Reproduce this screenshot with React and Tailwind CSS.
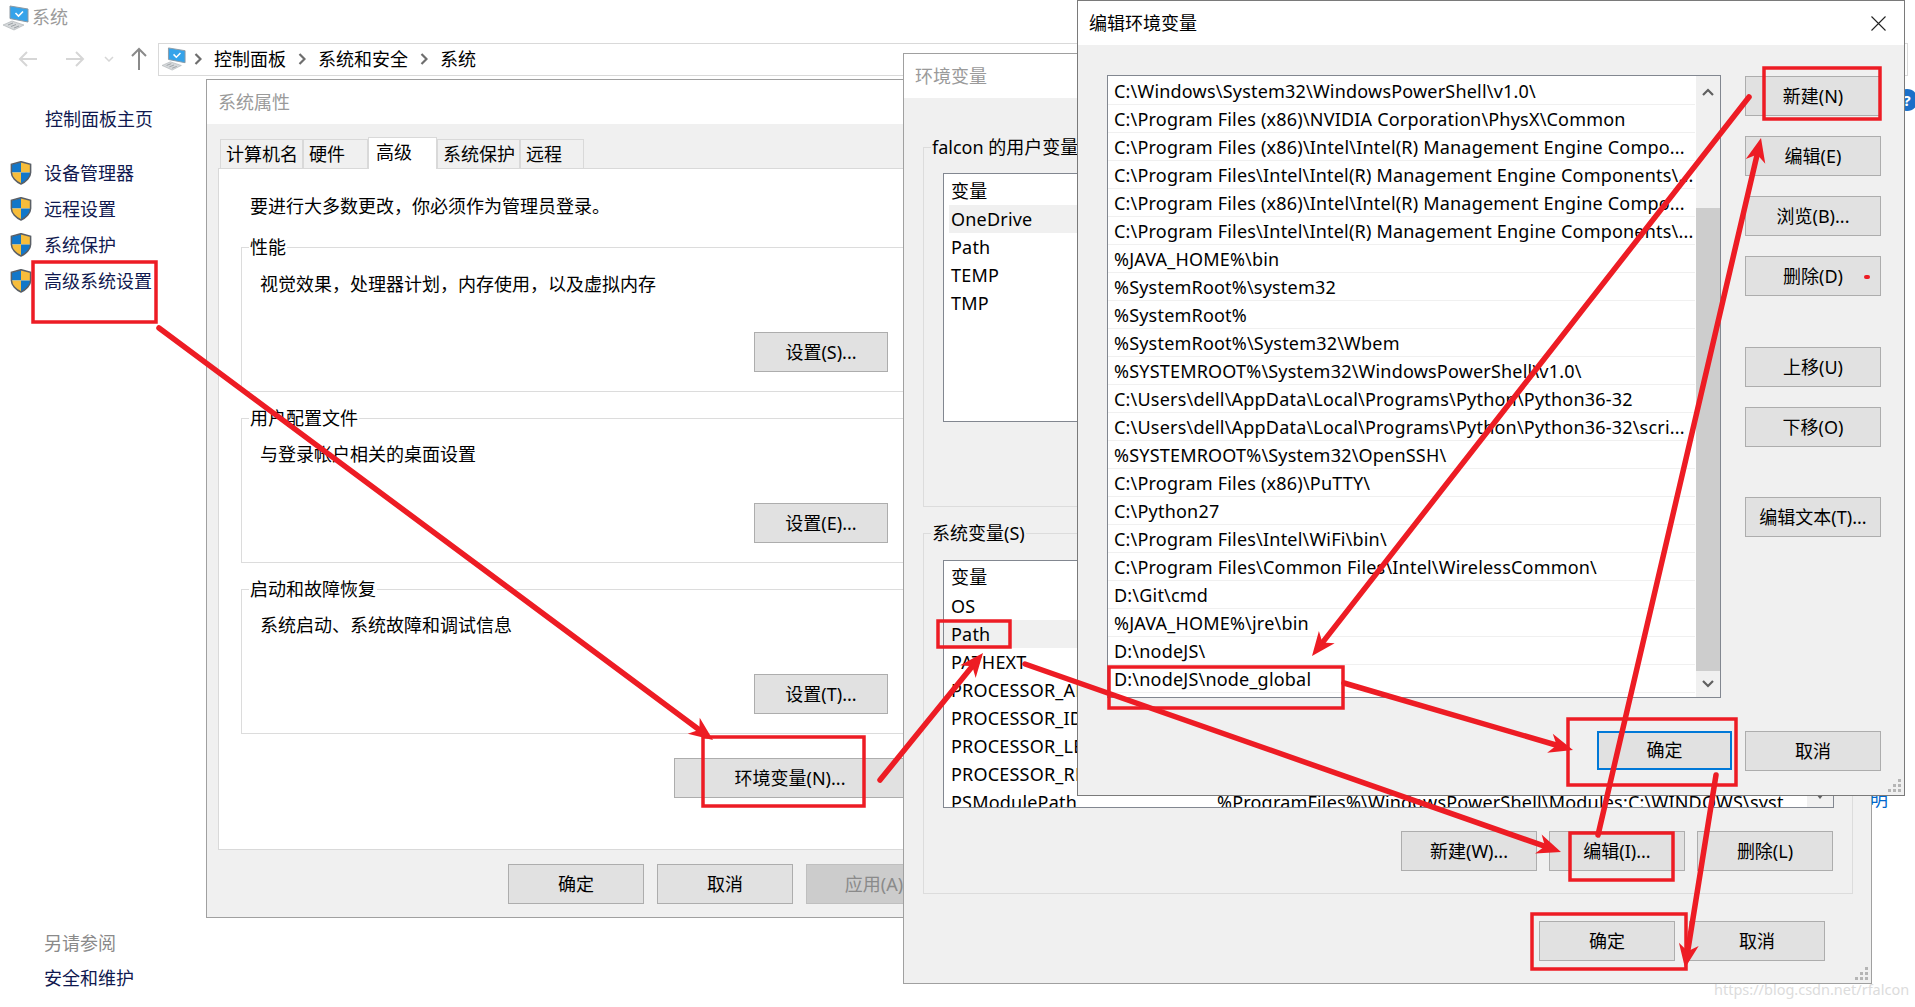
const font = { fontFamily: '"Noto Sans", "Noto Sans CJK SC", sans-serif' }

const editRows = [
  'C:\\Windows\\System32\\WindowsPowerShell\\v1.0\\',
  'C:\\Program Files (x86)\\NVIDIA Corporation\\PhysX\\Common',
  'C:\\Program Files (x86)\\Intel\\Intel(R) Management Engine Compo...',
  'C:\\Program Files\\Intel\\Intel(R) Management Engine Components\\...',
  'C:\\Program Files (x86)\\Intel\\Intel(R) Management Engine Compo...',
  'C:\\Program Files\\Intel\\Intel(R) Management Engine Components\\...',
  '%JAVA_HOME%\\bin',
  '%SystemRoot%\\system32',
  '%SystemRoot%',
  '%SystemRoot%\\System32\\Wbem',
  '%SYSTEMROOT%\\System32\\WindowsPowerShell\\v1.0\\',
  'C:\\Users\\dell\\AppData\\Local\\Programs\\Python\\Python36-32',
  'C:\\Users\\dell\\AppData\\Local\\Programs\\Python\\Python36-32\\scri...',
  '%SYSTEMROOT%\\System32\\OpenSSH\\',
  'C:\\Program Files (x86)\\PuTTY\\',
  'C:\\Python27',
  'C:\\Program Files\\Intel\\WiFi\\bin\\',
  'C:\\Program Files\\Common Files\\Intel\\WirelessCommon\\',
  'D:\\Git\\cmd',
  '%JAVA_HOME%\\jre\\bin',
  'D:\\nodeJS\\',
  'D:\\nodeJS\\node_global',
]

const systemVars = ['OS', 'Path', 'PATHEXT', 'PROCESSOR_ARCHITECTURE', 'PROCESSOR_IDENTIFIER', 'PROCESSOR_LEVEL', 'PROCESSOR_REVISION']

function Btn({ children, className = 'w-[136px]', disabled }) {
  return (
    <div
      className={`flex h-[40px] shrink-0 items-center justify-center border text-[18px] ${
        disabled ? 'border-[#bfbfbf] bg-[#cccccc] text-[#8a8a8a]' : 'border-[#adadad] bg-[#e1e1e1] text-black'
      } ${className}`}
    >
      {children}
    </div>
  )
}

function Shield() {
  return (
    <svg width="22" height="24" viewBox="1 1 22 25" className="shrink-0">
      <path d="M12 2 L2 4.7 V13 H12 Z" fill="#1277c9" />
      <path d="M12 2 L22 4.7 V13 H12 Z" fill="#f7bd3b" />
      <path d="M2 13 C2 18 7 23 12 25 V13 Z" fill="#f7bd3b" />
      <path d="M22 13 C22 18 17 23 12 25 V13 Z" fill="#1277c9" />
      <path d="M12 1.7 L2 4.4 V13 C2 18 7 23 12 25 C17 23 22 18 22 13 V4.4 Z" fill="none" stroke="#5a5f66" strokeWidth="1.6" />
    </svg>
  )
}

function Computer({ size = 26 }) {
  return (
    <svg width={size} height={size} viewBox="0 0 26 26" className="shrink-0">
      <path d="M0 20 L9 16 L21 20 L11 25 Z" fill="#d5d8da" stroke="#a9aeb2" strokeWidth="0.6" />
      <path d="M5 20 L10 18 M8 21.5 L13 19.5 M11 23 L16 21" stroke="#8d9398" strokeWidth="0.8" />
      <path d="M7 1 L25 4 V17 L7 13.5 Z" fill="#35a3ea" stroke="#8c99a3" strokeWidth="1" />
      <path d="M12.5 8 L15.5 11 L20 6.5" fill="none" stroke="#ffffff" strokeWidth="1.6" />
    </svg>
  )
}

function Chevron() {
  return (
    <svg width="8" height="14" viewBox="0 0 8 14" className="shrink-0">
      <path d="M1.5 2 L6.5 7 L1.5 12" fill="none" stroke="#6e6e6e" strokeWidth="2.2" />
    </svg>
  )
}

function NavArrow({ dir, color }) {
  return (
    <svg width="20" height="18" viewBox="0 0 20 18" className={`shrink-0 ${dir === 'right' ? 'rotate-180' : ''}`}>
      <path d="M19 9 H2 M9 2 L2 9 L9 16" fill="none" stroke={color} strokeWidth="2" />
    </svg>
  )
}

function Grip() {
  return (
    <svg width="14" height="14" viewBox="0 0 14 14" className="absolute bottom-[2px] right-[2px]">
      {[[10, 0], [5, 5], [10, 5], [0, 10], [5, 10], [10, 10]].map(([x, y]) => (
        <rect key={`${x}-${y}`} x={x} y={y} width="3" height="3" fill="#b5b5b5" />
      ))}
    </svg>
  )
}

function Group({ label, className, children }) {
  return (
    <div className={`relative border border-[#dcdcdc] ${className}`}>
      <span className="absolute left-[7px] top-[-15px] bg-inherit px-[1px] text-[18px] leading-[28px]">{label}</span>
      {children}
    </div>
  )
}

function Tab({ label, className, active }) {
  return (
    <div
      className={`flex items-center text-[18px] ${
        active
          ? 'z-10 mb-[-1px] h-[32px] border border-b-0 border-[#d9d9d9] bg-white pb-[3px] pl-[7px]'
          : 'h-[29px] border border-b-0 border-[#d9d9d9] pl-[5px]'
      } ${className}`}
    >
      {label}
    </div>
  )
}

function Arrow({ from, to, head = 24, wing = 10 }) {
  const dx = to[0] - from[0]
  const dy = to[1] - from[1]
  const len = Math.hypot(dx, dy)
  const ux = dx / len
  const uy = dy / len
  const at = (back, side) => `${to[0] - ux * back - uy * side},${to[1] - uy * back + ux * side}`
  const end = [to[0] - ux * 16, to[1] - uy * 16]
  return (
    <g>
      <line x1={from[0]} y1={from[1]} x2={end[0]} y2={end[1]} stroke="#ed1c24" strokeWidth="5.5" strokeLinecap="round" />
      <polygon points={`${at(0, 0)} ${at(head, wing)} ${at(17, 0)} ${at(head, -wing)}`} fill="#ed1c24" />
    </g>
  )
}

function Annotations() {
  const boxes = [
    [33, 262, 123, 60],
    [703, 737, 161, 69],
    [938, 621, 72, 26],
    [1109, 667, 234, 41],
    [1764, 68, 116, 51],
    [1568, 719, 168, 66],
    [1570, 833, 103, 47],
    [1532, 914, 154, 55],
  ]
  return (
    <svg width="1915" height="1007" viewBox="0 0 1915 1007" className="pointer-events-none absolute left-0 top-0 z-40">
      {boxes.map(([x, y, w, h]) => (
        <rect key={`${x}-${y}`} x={x} y={y} width={w} height={h} fill="none" stroke="#ed1c24" strokeWidth="3.5" />
      ))}
      <Arrow from={[159, 328]} to={[713, 740]} />
      <Arrow from={[880, 780]} to={[983, 653]} />
      <Arrow from={[1025, 664]} to={[1561, 852]} />
      <Arrow from={[1749, 97]} to={[1312, 656]} />
      <Arrow from={[1598, 835]} to={[1761, 138]} />
      <Arrow from={[1344, 683]} to={[1573, 750]} />
      <Arrow from={[1716, 775]} to={[1685, 968]} />
      <rect x="1864" y="275" width="6" height="4" rx="2" fill="#ed1c24" />
    </svg>
  )
}

function SystemDialog() {
  return (
    <div className="absolute left-[206px] top-[79px] z-10 flex h-[839px] w-[750px] flex-col border border-[#a0a0a0] bg-[#f0f0f0]">
      <div className="flex h-[44px] shrink-0 items-center bg-white pl-[11px] text-[18px] text-[#9a9a9a]">系统属性</div>
      <div className="flex h-[44px] items-end pl-[13px]">
        <Tab label="计算机名" className="w-[83px]" />
        <Tab label="硬件" className="w-[65px]" />
        <Tab label="高级" className="w-[69px]" active />
        <Tab label="系统保护" className="w-[83px]" />
        <Tab label="远程" className="w-[64px]" />
      </div>
      <div className="mx-[11px] flex h-[682px] flex-col border border-[#d9d9d9] bg-white pl-[22px] pr-[14px]">
        <p className="mt-[23px] pl-[9px] text-[18px] leading-[28px]">要进行大多数更改，你必须作为管理员登录。</p>
        <Group label="性能" className="mt-[27px] h-[145px] bg-white">
          <p className="pl-[18px] pt-[22px] text-[18px] leading-[28px]">视觉效果，处理器计划，内存使用，以及虚拟内存</p>
          <div className="absolute left-[512px] top-[84px]"><Btn className="w-[134px]">设置(S)...</Btn></div>
        </Group>
        <Group label="用户配置文件" className="mt-[26px] h-[145px] bg-white">
          <p className="pl-[18px] pt-[21px] text-[18px] leading-[28px]">与登录帐户相关的桌面设置</p>
          <div className="absolute left-[512px] top-[84px]"><Btn className="w-[134px]">设置(E)...</Btn></div>
        </Group>
        <Group label="启动和故障恢复" className="mt-[26px] h-[145px] bg-white">
          <p className="pl-[18px] pt-[21px] text-[18px] leading-[28px]">系统启动、系统故障和调试信息</p>
          <div className="absolute left-[512px] top-[84px]"><Btn className="w-[134px]">设置(T)...</Btn></div>
        </Group>
        <div className="ml-[433px] mt-[24px]"><Btn className="w-[232px]">环境变量(N)...</Btn></div>
      </div>
      <div className="flex gap-[13px] pl-[301px] pt-[14px]">
        <Btn>确定</Btn>
        <Btn>取消</Btn>
        <Btn disabled>应用(A)</Btn>
      </div>
    </div>
  )
}

function EnvDialog() {
  return (
    <div className="absolute left-[903px] top-[53px] z-20 flex h-[931px] w-[969px] flex-col border border-[#a0a0a0] bg-[#f0f0f0]">
      <div className="flex h-[44px] shrink-0 items-center bg-white pl-[11px] text-[18px] text-[#9a9a9a]">环境变量</div>
      <div className="flex flex-col pl-[19px] pr-[18px] pt-[49px]">
        <Group label="falcon 的用户变量(U)" className="h-[360px] bg-[#f0f0f0]">
          <div className="ml-[19px] mr-[18px] mt-[25px] h-[249px] border border-[#828790] bg-white pt-[3px] text-[18px] leading-[28px] tracking-[0.2px]">
            <div className="pl-[7px]">变量</div>
            <div className="ml-[5px] bg-[#f0f0f0] pl-[2px]">OneDrive</div>
            <div className="pl-[7px]">Path</div>
            <div className="pl-[7px]">TEMP</div>
            <div className="pl-[7px]">TMP</div>
          </div>
        </Group>
        <Group label="系统变量(S)" className="mt-[26px] h-[361px] bg-[#f0f0f0]">
          <div className="ml-[19px] mr-[18px] mt-[26px] h-[248px] overflow-hidden border border-[#828790] bg-white pt-[2px] text-[18px] leading-[28px] tracking-[0.2px]">
            <div className="h-[29px] pl-[7px]">变量</div>
            {systemVars.map((name) => (
              <div key={name} className={`h-[28px] whitespace-nowrap pl-[7px] ${name === 'Path' ? 'bg-[#f0f0f0]' : ''}`}>{name}</div>
            ))}
            <div className="relative flex h-[28px] pl-[7px]">
              <span className="w-[266px] shrink-0">PSModulePath</span>
              <span className="whitespace-nowrap">%ProgramFiles%\WindowsPowerShell\Modules;C:\WINDOWS\syst</span>
              <div className="absolute right-0 top-[-8px] flex h-[36px] w-[26px] justify-center bg-[#f0f0f0] pt-[14px]">
                <svg width="10" height="6" viewBox="0 0 10 6"><path d="M1 0 L5 5 L9 0 Z" fill="#606060" /></svg>
              </div>
            </div>
          </div>
          <div className="mt-[23px] flex justify-end gap-[12px] pr-[19px]">
            <Btn>新建(W)...</Btn>
            <Btn>编辑(I)...</Btn>
            <Btn>删除(L)</Btn>
          </div>
        </Group>
        <div className="mt-[27px] flex justify-end gap-[14px] pr-[28px]">
          <Btn>确定</Btn>
          <Btn>取消</Btn>
        </div>
      </div>
      <Grip />
    </div>
  )
}

function EditDialog() {
  return (
    <div className="absolute left-[1077px] top-0 z-30 flex h-[796px] w-[828px] flex-col border border-[#7a7a7a] bg-[#f0f0f0]">
      <div className="flex h-[44px] shrink-0 items-center justify-between bg-white pl-[11px] pr-[18px] text-[18px]">
        <span>编辑环境变量</span>
        <svg width="15" height="15" viewBox="0 0 15 15"><path d="M0.5 0.5 L14.5 14.5 M14.5 0.5 L0.5 14.5" stroke="#222" strokeWidth="1.1" /></svg>
      </div>
      <div className="flex pl-[29px] pr-[22px] pt-[30px]">
        <div className="flex h-[623px] w-[614px] border border-[#828790] bg-white">
          <div className="w-[587px] pt-[1px] text-[18px] tracking-[0.2px]">
            {editRows.map((row) => (
              <div key={row} className="h-[28px] whitespace-nowrap border-b border-[#f0f0f0] pl-[6px] leading-[28px]">{row}</div>
            ))}
          </div>
          <div className="ml-[1px] flex w-[24px] flex-col items-center bg-[#f0f0f0]">
            <svg width="12" height="8" viewBox="0 0 12 8" className="mt-[12px]"><path d="M1 7 L6 2 L11 7" fill="none" stroke="#606060" strokeWidth="2.2" /></svg>
            <div className="mt-[112px] h-[463px] w-full bg-[#cdcdcd]"></div>
            <svg width="12" height="8" viewBox="0 0 12 8" className="mt-[9px]"><path d="M1 1 L6 6 L11 1" fill="none" stroke="#606060" strokeWidth="2.2" /></svg>
          </div>
        </div>
        <div className="ml-[24px] flex flex-col gap-[20px] pt-[1px]">
          <Btn>新建(N)</Btn>
          <Btn>编辑(E)</Btn>
          <Btn>浏览(B)...</Btn>
          <Btn>删除(D)</Btn>
          <Btn className="mt-[31px] w-[136px]">上移(U)</Btn>
          <Btn>下移(O)</Btn>
          <Btn className="mt-[30px] w-[136px]">编辑文本(T)...</Btn>
        </div>
      </div>
      <div className="flex justify-end gap-[13px] pr-[23px] pt-[33px]">
        <div className="flex h-[39px] w-[135px] items-center justify-center border-2 border-[#0078d7] bg-[#e1e1e1] text-[18px]">确定</div>
        <Btn>取消</Btn>
      </div>
      <Grip />
    </div>
  )
}

export default function App() {
  return (
    <div className="relative flex h-[1007px] w-[1915px] flex-col overflow-hidden bg-white text-black" style={font}>
      {/* control panel window behind the dialogs */}
      <div className="flex h-[34px] items-center gap-[3px] pl-[3px] pt-[1px] text-[18px] text-[#9a9a9a]">
        <Computer />
        系统
      </div>
      <div className="mt-[8px] flex h-[33px] items-center pl-[18px] pr-[7px] pt-[1px]">
        <NavArrow color="#d6d6d6" />
        <span className="ml-[27px]"><NavArrow dir="right" color="#d6d6d6" /></span>
        <svg width="10" height="6" viewBox="0 0 10 6" className="ml-[19px]"><path d="M1 1 L5 5 L9 1" fill="none" stroke="#d6d6d6" strokeWidth="1.5" /></svg>
        <svg width="16" height="24" viewBox="0 0 16 24" className="ml-[17px]"><path d="M8 23 V2 M1 9 L8 2 L15 9" fill="none" stroke="#8a8a8a" strokeWidth="2" /></svg>
        <div className="ml-[11px] flex h-[33px] flex-1 items-center gap-[12px] border border-[#d9d9d9] pl-[3px] text-[18px]">
          <span className="mr-[-4px]"><Computer size={24} /></span>
          <Chevron />
          <span>控制面板</span>
          <Chevron />
          <span>系统和安全</span>
          <Chevron />
          <span>系统</span>
        </div>
      </div>
      <div className="flex flex-1 flex-col pb-[15px] pl-[10px] pt-[30px] text-[18px] leading-[28px] text-[#10194f]">
        <div className="pl-[35px]">控制面板主页</div>
        <div className="mt-[26px] flex flex-col gap-[8px]">
          {['设备管理器', '远程设置', '系统保护', '高级系统设置'].map((label) => (
            <div key={label} className="flex h-[28px] items-center gap-[12px]">
              <Shield />
              {label}
            </div>
          ))}
        </div>
        <div className="mt-auto pl-[34px] text-[#8a8a8a]">另请参阅</div>
        <div className="mt-[7px] pl-[34px]">安全和维护</div>
      </div>

      <div className="absolute left-[1896px] top-[89px] flex h-[22px] w-[22px] items-center justify-center rounded-full bg-[#1a6fc9] text-[15px] font-bold text-white">?</div>
      <div className="absolute left-[1870px] top-[785px] text-[18px] leading-[28px] text-[#0066cc]">明</div>

      <SystemDialog />
      <EnvDialog />
      <EditDialog />
      <Annotations />

      <div className="absolute left-[1714px] top-[978px] z-50 text-[14.5px] leading-[22px] text-[#dcdcdc]">https://blog.csdn.net/rfalcon</div>
    </div>
  )
}
